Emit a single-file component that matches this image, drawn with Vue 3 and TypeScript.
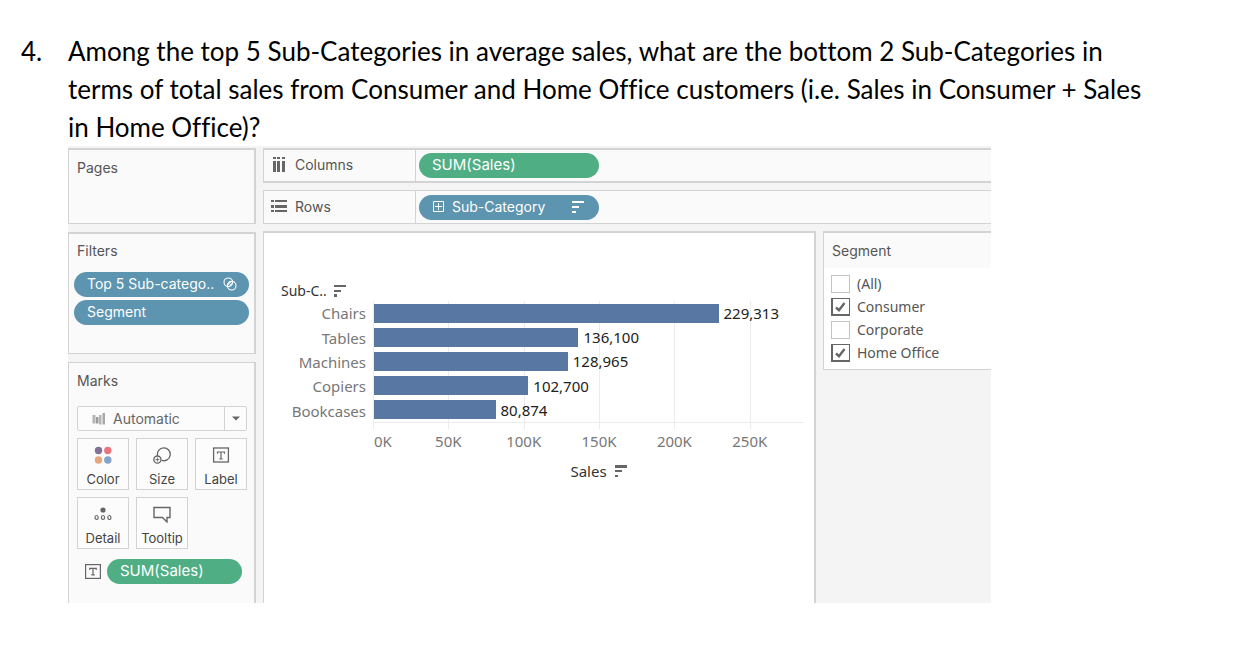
<script setup lang="ts">
import { ref } from 'vue'

interface Bar { name: string; value: number }
interface Segment { label: string; checked: boolean }

const axisMax = 286200
const bars: Bar[] = [
  { name: 'Chairs', value: 229313 },
  { name: 'Tables', value: 136100 },
  { name: 'Machines', value: 128965 },
  { name: 'Copiers', value: 102700 },
  { name: 'Bookcases', value: 80874 },
]
const ticks: string[] = ['0K', '50K', '100K', '150K', '200K', '250K']
const segments = ref<Segment[]>([
  { label: '(All)', checked: false },
  { label: 'Consumer', checked: true },
  { label: 'Corporate', checked: false },
  { label: 'Home Office', checked: true },
])
const markType = ref('Automatic')

const format = (n: number): string => n.toLocaleString('en-US')
const barWidth = (n: number): string => `${(n / axisMax) * 100}%`
</script>

<template>
  <main class="page">
    <div class="question">
      <span class="number">4.</span>
      <p class="prompt">
        Among the top 5 Sub-Categories in average sales, what are the bottom 2 Sub-Categories in
        terms of total sales from Consumer and Home Office customers (i.e. Sales in Consumer + Sales
        in Home Office)?
      </p>
    </div>

    <div class="workbook">
      <aside class="side">
        <section class="card pages"><h2>Pages</h2></section>

        <section class="card filters">
          <h2>Filters</h2>
          <button class="pill blue" type="button">
            <span>Top 5 Sub-catego..</span>
            <svg class="pill-end" width="14" height="14" viewBox="0 0 14 14" fill="none" stroke="#fff" stroke-width="1.1">
              <circle cx="5.3" cy="5.3" r="4.3" />
              <circle cx="8.7" cy="8.7" r="4.3" />
              <path d="M4.6 7.8 7.8 4.6M6.2 9.4 9.4 6.2" />
            </svg>
          </button>
          <button class="pill blue" type="button"><span>Segment</span></button>
        </section>

        <section class="card marks">
          <h2>Marks</h2>
          <div class="mark-type">
            <svg class="type-icon" width="14" height="12" viewBox="0 0 14 12">
              <rect x="0.5" y="2" width="3" height="8.5" fill="#b4b4b4" />
              <rect x="4" y="4" width="2.5" height="6.5" fill="#9a9a9a" />
              <rect x="7" y="2" width="2.500" height="9.5" fill="#b4b4b4" />
              <rect x="10.5" y="0" width="2.5" height="11.5" fill="#a8a8a8" />
            </svg>
            <select v-model="markType" aria-label="Mark type"><option>Automatic</option></select>
            <span class="arrow">
              <svg width="8" height="5" viewBox="0 0 8 5"><path d="M0 .5h8L4 4.5z" fill="#666" /></svg>
            </span>
          </div>
          <div class="mark-grid">
            <button type="button">
              <svg width="18" height="18" viewBox="0 0 18 18">
                <circle cx="4.5" cy="4.500" r="3.7" fill="#846f98" />
                <circle cx="13.8" cy="4.500" r="3.7" fill="#e8757f" />
                <circle cx="4.5" cy="14" r="3.7" fill="#e6a57c" />
                <circle cx="13.8" cy="14" r="3.7" fill="#85a2c8" />
              </svg>
              Color
            </button>
            <button type="button">
              <svg width="18" height="18" viewBox="0 0 18 18" fill="none" stroke="#666" stroke-width="1.3">
                <path d="M4.600 9.800A6.400 6.400 0 1 1 8.600 14.300" />
                <circle cx="4.4" cy="13.6" r="3.6" />
                <path d="M4.400 11.600v4M2.400 13.600h4" stroke-width=".9" />
              </svg>
              Size
            </button>
            <button type="button">
              <svg width="18" height="18" viewBox="0 0 18 18" fill="none" stroke="#666">
                <rect x="1.6" y="2" width="14.8" height="14" stroke-width="1.3" />
                <path d="M5.5 7.7V6h7v1.7M9 6v7M7.2 13h3.6" stroke-width="1.2" />
              </svg>
              Label
            </button>
            <button type="button">
              <svg width="18" height="18" viewBox="0 0 18 18" fill="none" stroke="#666" stroke-width="1.2">
                <circle cx="9" cy="5" r="2.6" fill="#666" stroke="none" />
                <ellipse cx="2.6" cy="12.500" rx="1.6" ry="2" />
                <ellipse cx="9" cy="12.500" rx="1.6" ry="2" />
                <ellipse cx="15.4" cy="12.500" rx="1.6" ry="2" />
              </svg>
              Detail
            </button>
            <button type="button">
              <svg width="18" height="18" viewBox="0 0 18 18" fill="none" stroke="#666" stroke-width="1.4">
                <path d="M1 2.500h16v10h-3v4.500L9.500 12.500H1z" />
              </svg>
              Tooltip
            </button>
          </div>
          <div class="encoding">
            <svg width="16" height="15" viewBox="0 0 16 15" fill="none" stroke="#666">
              <rect x=".6" y=".6" width="14.8" height="13.8" stroke-width="1.2" />
              <path d="M4.8 6V4.4h6.4V6M8 4.4v6.4M6.3 10.8h3.4" stroke-width="1.2" />
            </svg>
            <button class="pill green" type="button"><span>SUM(Sales)</span></button>
          </div>
        </section>
      </aside>

      <div class="main">
        <section class="shelf thick">
          <div class="shelf-name">
            <svg width="16" height="16" viewBox="0 0 16 16" fill="#666">
              <path d="M2 0h3v2H2zM6 0h3v2H6zM11 0h3v2h-3zM2 4h3v11H2zM6 4h3v11H6zM11 4h3v11h-3z" />
            </svg>
            Columns
          </div>
          <button class="pill green" type="button"><span>SUM(Sales)</span></button>
        </section>

        <section class="shelf">
          <div class="shelf-name">
            <svg width="16" height="16" viewBox="0 0 16 16" fill="#666">
              <path d="M0 1h3v2H0zM4 1h12v2H4zM0 6h3v3H0zM4 6h12v3H4zM0 11h3v2H0zM4 11h12v2H4z" />
            </svg>
            Rows
          </div>
          <button class="pill blue" type="button">
            <svg width="11" height="11" viewBox="0 0 11 11" fill="none" stroke="#fff"><path d="M.5.5h10v10H.5zM5.500 2v7M2 5.500h7" /></svg>
            <span>Sub-Category</span>
            <svg class="pill-end" width="12" height="12" viewBox="0 0 12 12" fill="#fff"><path d="M0 0h12v2H0zM0 5h7v2H0zM0 10h4v2H0z" /></svg>
          </button>
        </section>

        <div class="view">
          <section class="chart">
            <div class="row-header">
              Sub-C..
              <svg width="12" height="12" viewBox="0 0 12 12" fill="#666"><path d="M0 0h12v2H0zM0 5h7v2H0zM0 9h3v3H0z" /></svg>
            </div>
            <ul class="names">
              <li v-for="bar in bars" :key="bar.name">{{ bar.name }}</li>
            </ul>
            <div class="gridlines"><i v-for="tick in ticks" :key="tick"></i></div>
            <div class="bars">
              <div v-for="bar in bars" :key="bar.name" class="bar-row">
                <span class="bar" :style="{ width: barWidth(bar.value) }"></span>
                <span class="value">{{ format(bar.value) }}</span>
              </div>
            </div>
            <div class="ticks"><span v-for="tick in ticks" :key="tick">{{ tick }}</span></div>
            <div class="axis-title">
              Sales
              <svg width="12" height="12" viewBox="0 0 12 12" fill="#666"><path d="M0 0h12v3H0zM0 5h7v2H0zM0 10h3v2H0z" /></svg>
            </div>
          </section>

          <section class="segment">
            <h2>Segment</h2>
            <div class="options">
              <label v-for="segment in segments" :key="segment.label">
                <input v-model="segment.checked" type="checkbox" />
                <svg class="tick" width="11" height="10" viewBox="0 0 11 10" fill="none" stroke="#666" stroke-width="2.4"><path d="M1 5.500 4 8.200 9.500 1" /></svg>
                <span>{{ segment.label }}</span>
              </label>
            </div>
          </section>
        </div>
      </div>
    </div>
  </main>
</template>

<style>
body {
  margin: 0;
  background: #fff;
}
</style>

<style scoped>
.page {
  font-family: Inter, "Liberation Sans", sans-serif;
  font-size: 14px;
  line-height: 20px;
  color: #555;
}

h2,
p,
ul {
  margin: 0;
  padding: 0;
}

h2 {
  font-size: 14px;
  font-weight: 400;
  line-height: 20px;
}

svg {
  display: block;
  flex: none;
}

button {
  font: inherit;
  color: inherit;
  margin: 0;
  cursor: pointer;
}

.question {
  display: flex;
  padding: 32px 96px 0 21px;
  font-family: Lato, sans-serif;
  font-size: 26px;
  font-variant-ligatures: none;
  line-height: 38px;
  color: #000;
}

.number {
  flex: 0 0 47px;
}

.workbook {
  display: grid;
  grid-template-columns: 188px minmax(0, 1fr);
  gap: 7px;
  margin: 0 265px 45px 68px;
  padding-top: 2px;
  background: #f4f4f4;
}

.side {
  display: flex;
  flex-direction: column;
  gap: 8px;
}

.card {
  box-sizing: border-box;
  border: 1px solid #d3d3d3;
  border-right-width: 2px;
  background: #fafafa;
  padding: 8px 7px 8px 8px;
}

.pages {
  border-top-width: 2px;
  min-height: 76px;
}

.filters {
  display: flex;
  flex-direction: column;
  gap: 3px;
  border-top-width: 2px;
  min-height: 122px;
  padding: 7px 5px;
}

.filters h2 {
  margin: 0 3px 8px;
}

.marks {
  flex: 1;
  border-bottom: 0;
  padding-bottom: 19px;
}

.pill {
  display: flex;
  align-items: center;
  box-sizing: border-box;
  height: 25px;
  padding: 0 12px 1px 13px;
  border: 0;
  border-radius: 13px;
  color: #fff;
  white-space: nowrap;
}

.pill-end {
  margin-left: auto;
}

.blue {
  background: #5d94b0;
}

.green {
  background: #50ae85;
  font-size: 15px;
}

.mark-type {
  display: flex;
  align-items: center;
  box-sizing: border-box;
  height: 25px;
  margin-top: 15px;
  border: 1px solid #d3d3d3;
  border-radius: 2px;
  padding-left: 14px;
  background: #fcfcfc;
}

.mark-type select {
  appearance: none;
  flex: 1;
  min-width: 0;
  border: 0;
  padding: 0 0 0 7px;
  background: none;
  font: inherit;
  color: #666;
}

.arrow {
  display: flex;
  align-items: center;
  justify-content: center;
  align-self: stretch;
  width: 21px;
  border-left: 1px solid #d3d3d3;
}

.mark-grid {
  display: grid;
  grid-template-columns: repeat(3, 1fr);
  gap: 7px;
  margin-top: 7px;
}

.mark-grid button {
  display: flex;
  flex-direction: column;
  align-items: center;
  justify-content: space-between;
  box-sizing: border-box;
  height: 52px;
  padding: 7px 0 0;
  border: 1px solid #d3d3d3;
  background: #fcfcfc;
  font-size: 13px;
  line-height: 20px;
  color: #444;
}

.encoding {
  display: flex;
  align-items: center;
  gap: 6px;
  margin: 10px 5px 0 8px;
}

.encoding .pill {
  flex: 1;
}

.main {
  display: flex;
  flex-direction: column;
  gap: 7px;
}

.shelf {
  display: flex;
  align-items: center;
  box-sizing: border-box;
  height: 34px;
  border: 1px solid #d3d3d3;
  border-right: 0;
  background: #fafafa;
}

.thick {
  height: 35px;
  border-top-width: 2px;
  border-bottom-width: 2px;
}

.shelf-name {
  display: flex;
  align-items: center;
  align-self: stretch;
  box-sizing: border-box;
  gap: 8px;
  width: 152px;
  padding-left: 7px;
  border-right: 1px solid #d3d3d3;
}

.thick .shelf-name {
  padding-bottom: 1px;
}

.shelf .pill {
  gap: 8px;
  width: 180px;
  margin-left: 3px;
}

.shelf .blue {
  padding-left: 14px;
  padding-right: 15px;
}

.view {
  display: flex;
  flex: 1;
  align-items: flex-start;
  gap: 7px;
}

.chart {
  display: grid;
  grid-template-columns: 85px minmax(0, 1fr);
  grid-template-rows: 20px 122px 6px auto auto;
  column-gap: 7px;
  flex: 1;
  align-self: stretch;
  align-content: start;
  box-sizing: border-box;
  min-width: 0;
  padding: 48px 10px 0 17px;
  border: solid #d3d3d3;
  border-width: 2px 2px 0 1px;
  background: #fff;
  font-family: "Noto Sans", sans-serif;
  font-size: 15px;
  line-height: 20px;
  color: #777;
}

.row-header {
  display: flex;
  align-items: center;
  gap: 7px;
  font-size: 14px;
  white-space: nowrap;
  color: #333;
}

.names {
  grid-area: 2 / 1;
  display: grid;
  grid-template-rows: repeat(5, 1fr);
  align-items: center;
  list-style: none;
  text-align: right;
}

.gridlines {
  grid-area: 2 / 2 / 4 / 3;
  display: grid;
  grid-template-columns: repeat(5, 100fr) 72fr;
}

.gridlines i {
  border-left: 1px solid #ececec;
}

.bars {
  grid-area: 2 / 2;
  display: grid;
  grid-template-rows: repeat(5, 1fr);
  padding-left: 1px;
  border-bottom: 1px solid #ececec;
}

.bar-row {
  display: flex;
  align-items: center;
  gap: 5px;
}

.bar {
  flex: none;
  height: 19px;
  background: #5877a3;
}

.value {
  color: #222;
}

.ticks {
  grid-area: 4 / 2;
  display: grid;
  grid-template-columns: 50fr repeat(5, 100fr) 22fr;
  margin-top: 2px;
  text-align: center;
}

.ticks span:first-child {
  padding-left: 1px;
  text-align: left;
}

.axis-title {
  grid-area: 5 / 2;
  display: flex;
  align-items: center;
  justify-content: center;
  gap: 8px;
  margin-top: 10px;
  padding-left: 20px;
  color: #333;
}

.segment {
  box-sizing: border-box;
  width: 168px;
  border: solid #d3d3d3;
  border-width: 2px 0 1px 1px;
  background: #fff;
}

.segment h2 {
  padding: 8px 8px 7px;
  background: #fafafa;
}

.options {
  display: grid;
  grid-auto-rows: 23px;
  padding: 4px 7px 5px;
}

.options label {
  display: grid;
  grid-template-columns: 19px 1fr;
  column-gap: 7px;
  align-items: center;
  font-family: "Noto Sans", sans-serif;
}

.options input {
  appearance: none;
  grid-area: 1 / 1;
  width: 19px;
  height: 18px;
  margin: 0;
  border: 1px solid #c4c4c4;
  background: #fff;
}

.options input:checked {
  border-color: #666;
  border-width: 1px 1px 2px 2px;
}

.tick {
  grid-area: 1 / 1;
  justify-self: center;
  visibility: hidden;
  pointer-events: none;
}

.options input:checked + .tick {
  visibility: visible;
}
</style>
